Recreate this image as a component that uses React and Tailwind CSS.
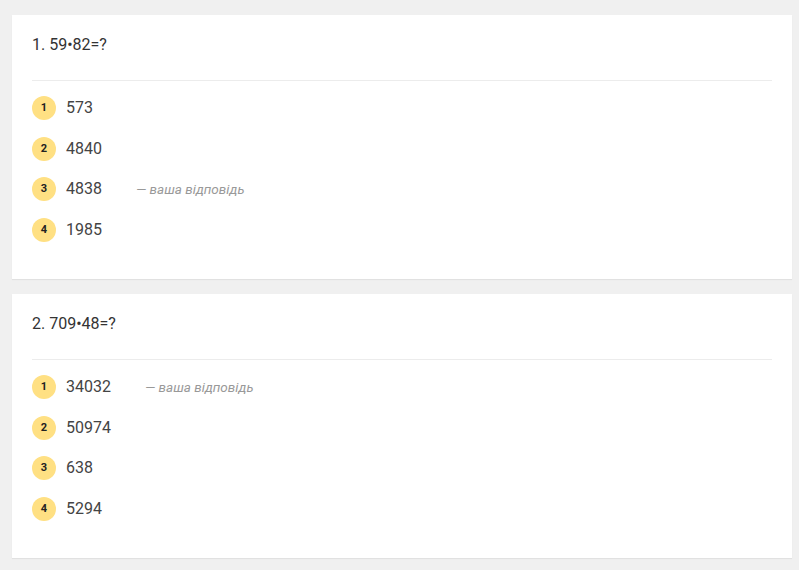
import React from "react";

const questions = [
  {
    num: 1,
    text: "59•82=?",
    options: ["573", "4840", "4838", "1985"],
    chosen: 2,
  },
  {
    num: 2,
    text: "709•48=?",
    options: ["34032", "50974", "638", "5294"],
    chosen: 0,
  },
];

function Question({ q }) {
  return (
    <div className="bg-white px-5 pt-5 pb-[29px] shadow-[0_1px_1px_rgba(0,0,0,0.06)]">
      <div className="text-[16px] leading-5 text-[#333]">
        {q.num}. {q.text}
      </div>
      <div className="mt-[25px] mb-[7px] border-t border-[#ececec]" />
      {q.options.map((opt, i) => (
        <div key={i} className="flex h-[40.5px] items-center">
          <span className="flex h-6 w-6 items-center justify-center rounded-full bg-[#ffe083] text-[11px] font-bold text-[#222]">
            {i + 1}
          </span>
          <span className="ml-[10px] text-[16px] text-[#444]">{opt}</span>
          {q.chosen === i && (
            <span className="ml-[34px] text-[13.5px] italic text-[#999]">
              — ваша відповідь
            </span>
          )}
        </div>
      ))}
    </div>
  );
}

export default function App() {
  return (
    <div
      className="min-h-[570px] bg-[#f0f0f0] px-3 pt-[15px] pr-[7px]"
      style={{ fontFamily: "Roboto, 'Noto Sans', sans-serif" }}
    >
      <div className="flex flex-col gap-[15px]">
        {questions.map((q) => (
          <Question key={q.num} q={q} />
        ))}
      </div>
    </div>
  );
}
